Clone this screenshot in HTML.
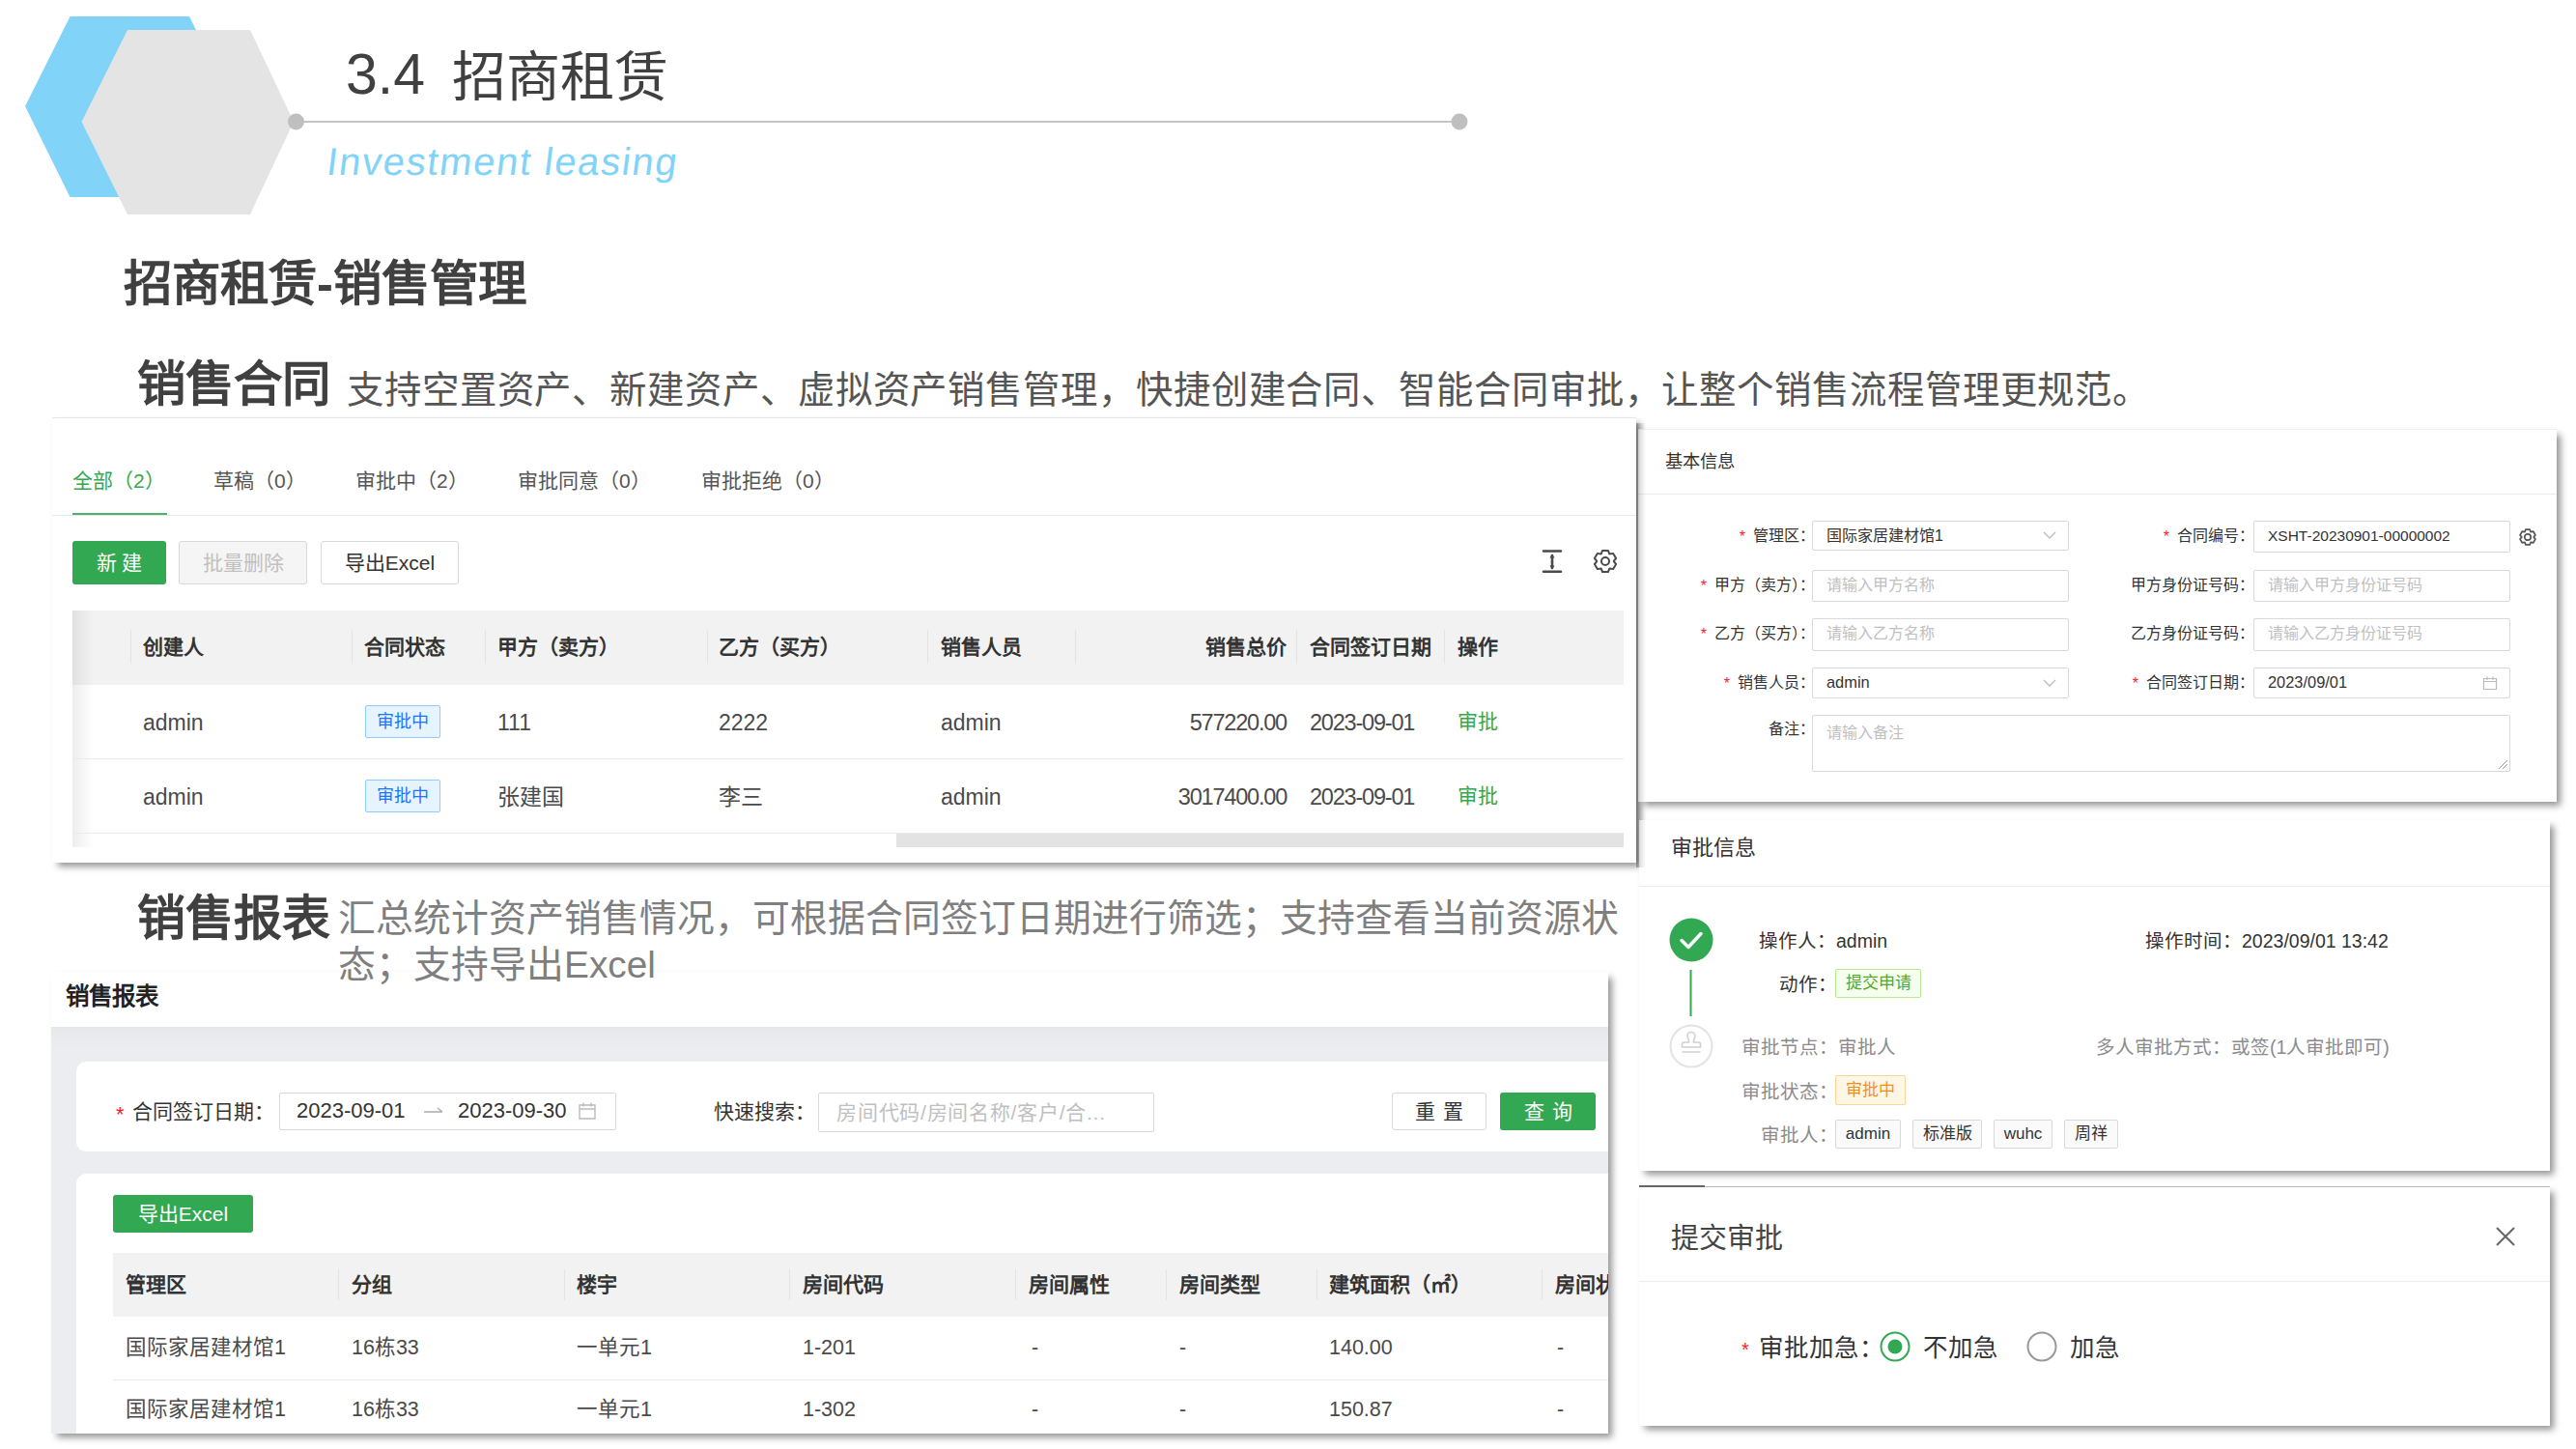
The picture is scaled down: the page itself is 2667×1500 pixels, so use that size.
<!DOCTYPE html>
<html lang="zh-CN"><head><meta charset="utf-8">
<style>
*{box-sizing:border-box;margin:0;padding:0}
html,body{width:2667px;height:1500px;overflow:hidden;background:#fff}
body{position:relative;font-family:"Liberation Sans",sans-serif;color:#333}
.a{position:absolute;white-space:nowrap}
.panel{position:absolute;background:#fff}
.ln{position:absolute;background:#e8e8e8}
.t{position:absolute;white-space:nowrap;line-height:1}
.g{color:#33a852}
.btn{position:absolute;border-radius:3px;text-align:center;white-space:nowrap}
.th{font-weight:bold;color:#333}
.lb{font-size:16px;color:#333;text-align:right}
.rq2{font-size:16px;color:#f5222d;margin-right:8px;position:relative;top:1px}
.rq{font-size:16px;color:#f5222d}
.inp{position:absolute;border:1px solid #d9d9d9;border-radius:2px;background:#fff;font-size:16px;line-height:29px;padding-left:14px;color:#333;white-space:nowrap;overflow:hidden}
.ph{color:#c0c0c0}
.wt{height:30px;background:#fafafa;border:1px solid #d9d9d9;color:#333;font-size:17px;line-height:28px}
.rc{font-size:21.5px;color:#4a4a4a}
.tag{position:absolute;border-radius:2px;text-align:center;white-space:nowrap}

</style></head><body>

<!-- ===== HEADER ===== -->
<svg class="a" style="left:0;top:0" width="1540" height="240" viewBox="0 0 1540 240">
  <polygon points="72.5,17 196,17 242,110 196,204 72.5,204 26,110" fill="#81d3f8"/>
  <polygon points="132,31 259,31 304,126 259,222 132,222 84.5,126" fill="#e4e4e4"/>
  <rect x="306" y="125" width="1205" height="2" fill="#c4c4c4"/>
  <circle cx="306.5" cy="126" r="8.5" fill="#bfbfbf"/>
  <circle cx="1511" cy="126" r="8.5" fill="#bfbfbf"/>
</svg>
<div class="a" id="t34" style="left:358px;top:44px;font-size:56px;line-height:70px;color:#404040"><span style="font-size:59px;position:relative;top:-2px">3.4</span><span style="margin-left:28px">招商租赁</span></div>
<div class="a" id="inv" style="left:337px;top:142px;transform:skewX(-7deg);transform-origin:0 38px;font-size:40px;line-height:50px;color:#81d3f8;letter-spacing:1.7px">Investment leasing</div>
<div class="a" id="sub" style="left:128px;top:261px;font-size:50.5px;line-height:66px;color:#404040;font-weight:bold">招商租赁-销售管理</div>

<!-- ===== SECTION 1 HEADING ===== -->
<div class="a" id="h1" style="left:142px;top:365px;font-size:50.5px;line-height:66px;color:#404040;font-weight:bold">销售合同</div>
<div class="a" id="d1" style="left:359px;top:379px;font-size:38.4px;letter-spacing:0.9px;line-height:50px;color:#555">支持空置资产、新建资产、虚拟资产销售管理，快捷创建合同、智能合同审批，让整个销售流程管理更规范。</div>

<!-- ===== PANEL 1 ===== -->
<div class="panel" id="p1" style="left:54px;top:432px;width:1640px;height:461px;border-top:1px solid #e6e6e6;box-shadow:5px 5px 7px -1px rgba(0,0,0,.42)">
</div>


<!-- tabs -->
<div class="t g" style="left:75px;top:487px;font-size:21px">全部（2）</div>
<div class="t" style="left:221px;top:487px;font-size:21px;color:#555">草稿（0）</div>
<div class="t" style="left:368px;top:487px;font-size:21px;color:#555">审批中（2）</div>
<div class="t" style="left:536px;top:487px;font-size:21px;color:#555">审批同意（0）</div>
<div class="t" style="left:726px;top:487px;font-size:21px;color:#555">审批拒绝（0）</div>
<div class="a" style="left:75px;top:531px;width:98px;height:3px;background:#4fb06f"></div>
<div class="ln" style="left:54px;top:533px;width:1640px;height:1px;background:#e6e6e6"></div>
<!-- buttons -->
<div class="btn" style="left:75px;top:560px;width:97px;height:45px;background:#33a852;color:#fff;font-size:21px;line-height:45px;letter-spacing:5px;padding-left:4px">新建</div>
<div class="btn" style="left:185px;top:560px;width:133px;height:45px;background:#f5f5f5;border:1px solid #d9d9d9;color:#c0c0c0;font-size:21px;line-height:43px">批量删除</div>
<div class="btn" style="left:332px;top:560px;width:143px;height:45px;background:#fff;border:1px solid #d9d9d9;color:#333;font-size:21px;line-height:43px">导出Excel</div>
<!-- toolbar icons -->
<svg class="a" style="left:1594px;top:566px" width="26" height="30" viewBox="0 0 26 30">
  <path d="M4 4.5H22M4 25.7H22M13 9V22" stroke="#4a4a4a" stroke-width="2.6" fill="none" stroke-linecap="round"/>
  <path d="M13 7.5L15.6 11.5H10.4ZM13 23.5L15.6 19.5H10.4Z" fill="#4a4a4a"/>
</svg>
<svg class="a" style="left:1648px;top:567px" width="28" height="28" viewBox="0 0 28 28">
  <path fill="none" stroke="#4a4a4a" stroke-width="2" stroke-linejoin="round" d="M9.78 6.28 L11.04 2.89 L16.96 2.89 L18.22 6.28 L18.58 6.48 L22.15 5.88 L25.10 11.00 L22.80 13.79 L22.80 14.21 L25.10 17.00 L22.15 22.12 L18.58 21.52 L18.22 21.72 L16.96 25.11 L11.04 25.11 L9.78 21.72 L9.42 21.52 L5.85 22.12 L2.90 17.00 L5.20 14.21 L5.20 13.79 L2.90 11.00 L5.85 5.88 L9.42 6.48Z"/>
  <circle cx="14" cy="14" r="4" fill="none" stroke="#4a4a4a" stroke-width="2"/>
</svg>
<!-- table -->
<div class="a" style="left:75px;top:632px;width:1606px;height:77px;background:#f2f2f2"></div>
<div class="a" style="left:75px;top:632px;width:22px;height:245px;background:linear-gradient(90deg,rgba(0,0,0,.07),rgba(0,0,0,0))"></div>
<div class="ln" style="left:75px;top:785px;width:1606px;height:1px;background:#ebebeb"></div>
<div class="ln" style="left:75px;top:862px;width:1606px;height:1px;background:#ebebeb"></div>
<div class="a" style="left:928px;top:863px;width:753px;height:14px;background:#e3e3e3"></div>
<div class="ln" style="left:135px;top:652px;width:1px;height:35px;background:#e3e3e3"></div>
<div class="ln" style="left:364px;top:652px;width:1px;height:35px;background:#e3e3e3"></div>
<div class="ln" style="left:502px;top:652px;width:1px;height:35px;background:#e3e3e3"></div>
<div class="ln" style="left:732px;top:652px;width:1px;height:35px;background:#e3e3e3"></div>
<div class="ln" style="left:960px;top:652px;width:1px;height:35px;background:#e3e3e3"></div>
<div class="ln" style="left:1113px;top:652px;width:1px;height:35px;background:#e3e3e3"></div>
<div class="ln" style="left:1342px;top:652px;width:1px;height:35px;background:#e3e3e3"></div>
<div class="ln" style="left:1495px;top:652px;width:1px;height:35px;background:#e3e3e3"></div>
<div class="t th" style="left:148px;top:659px;font-size:21px">创建人</div>
<div class="t th" style="left:377px;top:659px;font-size:21px">合同状态</div>
<div class="t th" style="left:515px;top:659px;font-size:21px">甲方（卖方）</div>
<div class="t th" style="left:744px;top:659px;font-size:21px">乙方（买方）</div>
<div class="t th" style="left:974px;top:659px;font-size:21px">销售人员</div>
<div class="t th" style="left:1248px;top:659px;font-size:21px;width:84px;text-align:right">销售总价</div>
<div class="t th" style="left:1356px;top:659px;font-size:21px">合同签订日期</div>
<div class="t th" style="left:1509px;top:659px;font-size:21px">操作</div>
<!-- row 1 -->
<div class="t" style="left:148px;top:737px;font-size:23px;color:#4a4a4a">admin</div>
<div class="tag" style="left:378px;top:730px;width:78px;height:34px;background:#e6f4ff;border:1px solid #91caff;color:#1677ff;font-size:18px;line-height:32px">审批中</div>
<div class="t" style="left:515px;top:737px;font-size:23px;color:#4a4a4a">111</div>
<div class="t" style="left:744px;top:737px;font-size:23px;color:#4a4a4a">2222</div>
<div class="t" style="left:974px;top:737px;font-size:23px;color:#4a4a4a">admin</div>
<div class="t" style="left:1132px;top:737px;font-size:23.5px;color:#4a4a4a;width:200px;text-align:right;letter-spacing:-1.2px">577220.00</div>
<div class="t" style="left:1356px;top:737px;font-size:23.5px;letter-spacing:-1.2px;color:#4a4a4a">2023-09-01</div>
<div class="t g" style="left:1509px;top:736px;font-size:21px">审批</div>
<!-- row 2 -->
<div class="t" style="left:148px;top:814px;font-size:23px;color:#4a4a4a">admin</div>
<div class="tag" style="left:378px;top:807px;width:78px;height:34px;background:#e6f4ff;border:1px solid #91caff;color:#1677ff;font-size:18px;line-height:32px">审批中</div>
<div class="t" style="left:515px;top:814px;font-size:23px;color:#4a4a4a">张建国</div>
<div class="t" style="left:744px;top:814px;font-size:23px;color:#4a4a4a">李三</div>
<div class="t" style="left:974px;top:814px;font-size:23px;color:#4a4a4a">admin</div>
<div class="t" style="left:1132px;top:814px;font-size:23.5px;color:#4a4a4a;width:200px;text-align:right;letter-spacing:-1.2px">3017400.00</div>
<div class="t" style="left:1356px;top:814px;font-size:23.5px;letter-spacing:-1.2px;color:#4a4a4a">2023-09-01</div>
<div class="t g" style="left:1509px;top:813px;font-size:21px">审批</div>

<!-- ===== PANEL 2 ===== -->
<div class="panel" id="p2" style="left:1696px;top:444px;width:951px;height:386px;border-top:1px solid #eee;box-shadow:5px 5px 7px -1px rgba(0,0,0,.42)">
</div>


<div class="t" style="left:1724px;top:469px;font-size:18.3px;color:#333">基本信息</div>
<div class="ln" style="left:1696px;top:511px;width:951px;height:1px;background:#ececec"></div>
<!-- labels left -->
<div class="t lb" style="left:1681px;top:547px;width:198px"><span class="rq2">*</span>管理区：</div>
<div class="t lb" style="left:1681px;top:598px;width:198px"><span class="rq2">*</span>甲方（卖方）：</div>
<div class="t lb" style="left:1681px;top:648px;width:198px"><span class="rq2">*</span>乙方（买方）：</div>
<div class="t lb" style="left:1681px;top:699px;width:198px"><span class="rq2">*</span>销售人员：</div>
<div class="t lb" style="left:1681px;top:747px;width:198px">备注：</div>
<!-- labels right -->
<div class="t lb" style="left:2134px;top:547px;width:200px"><span class="rq2">*</span>合同编号：</div>
<div class="t lb" style="left:2134px;top:598px;width:200px">甲方身份证号码：</div>
<div class="t lb" style="left:2134px;top:648px;width:200px">乙方身份证号码：</div>
<div class="t lb" style="left:2134px;top:699px;width:200px"><span class="rq2">*</span>合同签订日期：</div>
<!-- inputs -->
<div class="inp" style="left:1876px;top:539px;width:266px;height:31px">国际家居建材馆1</div>
<div class="inp ph" style="left:1876px;top:590px;width:266px;height:33px">请输入甲方名称</div>
<div class="inp ph" style="left:1876px;top:640px;width:266px;height:34px">请输入乙方名称</div>
<div class="inp" style="left:1876px;top:691px;width:266px;height:32px;font-size:16.4px">admin</div>
<div class="inp ph" style="left:1876px;top:740px;width:723px;height:59px;line-height:36px">请输入备注</div>
<div class="inp" style="left:2333px;top:539px;width:266px;height:33px;font-size:15.5px">XSHT-20230901-00000002</div>
<div class="inp ph" style="left:2333px;top:590px;width:266px;height:33px">请输入甲方身份证号码</div>
<div class="inp ph" style="left:2333px;top:640px;width:266px;height:34px">请输入乙方身份证号码</div>
<div class="inp" style="left:2333px;top:691px;width:266px;height:32px;font-size:16.4px">2023/09/01</div>
<svg class="a" style="left:2115px;top:549px" width="14" height="10" viewBox="0 0 14 10"><path d="M1 2L7 8L13 2" stroke="#bbb" stroke-width="1.3" fill="none"/></svg>
<svg class="a" style="left:2115px;top:702px" width="14" height="10" viewBox="0 0 14 10"><path d="M1 2L7 8L13 2" stroke="#bbb" stroke-width="1.3" fill="none"/></svg>
<svg class="a" style="left:2570px;top:699px" width="16" height="16" viewBox="0 0 16 16"><path d="M1.5 3.5H14.5V14.5H1.5ZM1.5 6.5H14.5M5 1.5V5M11 1.5V5" stroke="#bbb" stroke-width="1.2" fill="none"/></svg>
<svg class="a" style="left:2607px;top:546px" width="20" height="20" viewBox="0 0 28 28">
  <path fill="none" stroke="#555" stroke-width="2.4" stroke-linejoin="round" d="M9.78 6.28 L11.04 2.89 L16.96 2.89 L18.22 6.28 L18.58 6.48 L22.15 5.88 L25.10 11.00 L22.80 13.79 L22.80 14.21 L25.10 17.00 L22.15 22.12 L18.58 21.52 L18.22 21.72 L16.96 25.11 L11.04 25.11 L9.78 21.72 L9.42 21.52 L5.85 22.12 L2.90 17.00 L5.20 14.21 L5.20 13.79 L2.90 11.00 L5.85 5.88 L9.42 6.48Z"/>
  <circle cx="14" cy="14" r="4.5" fill="none" stroke="#555" stroke-width="2.4"/>
</svg>
<svg class="a" style="left:2585px;top:785px" width="12" height="12" viewBox="0 0 12 12"><path d="M2 11L11 2M6 11L11 6" stroke="#999" stroke-width="1"/></svg>

<!-- ===== PANEL 3 ===== -->
<div class="panel" id="p3" style="left:1697px;top:849px;width:943px;height:363px;box-shadow:5px 5px 7px -1px rgba(0,0,0,.42)">
</div>


<div class="t" style="left:1730px;top:867px;font-size:22px;color:#333">审批信息</div>
<div class="ln" style="left:1697px;top:917px;width:943px;height:1px;background:#ececec"></div>
<svg class="a" style="left:1720px;top:942px" width="62" height="175" viewBox="0 0 62 175">
  <circle cx="31" cy="31" r="22.5" fill="#33a852"/>
  <path d="M21 31.5L28 38.5L41 24.5" stroke="#fff" stroke-width="3.5" fill="none" stroke-linecap="round" stroke-linejoin="round"/>
  <rect x="29.5" y="62" width="2" height="48" fill="#33a852"/>
  <circle cx="31" cy="141" r="21.5" fill="#fff" stroke="#e3e3e3" stroke-width="2"/>
  <path d="M27 130.5a4 4 0 0 1 8 0c0 2-1.5 3-1.5 5v1.5h5a2 2 0 0 1 2 2v3h-19v-3a2 2 0 0 1 2-2h5v-1.5c0-2-1.5-3-1.5-5zM21.5 147h19" stroke="#d0d0d0" stroke-width="1.6" fill="none"/>
</svg>
<div class="t" style="left:1821px;top:965px;font-size:19.5px;color:#333">操作人：<span style="margin-left:0px">admin</span></div>
<div class="t" style="left:2221px;top:965px;font-size:19.5px;color:#333">操作时间：2023/09/01 13:42</div>
<div class="t" style="left:1842px;top:1010px;font-size:19.5px;color:#333">动作：</div>
<div class="tag" style="left:1900px;top:1003px;width:89px;height:30px;background:#f6ffed;border:1px solid #b7eb8f;color:#52a82a;font-size:17px;line-height:28px">提交申请</div>
<div class="t" style="left:1803px;top:1075px;font-size:19.5px;color:#8c8c8c">审批节点：审批人</div>
<div class="t" style="left:2170px;top:1075px;font-size:19.5px;color:#8c8c8c">多人审批方式：或签(1人审批即可)</div>
<div class="t" style="left:1803px;top:1121px;font-size:19.5px;color:#8c8c8c">审批状态：</div>
<div class="tag" style="left:1900px;top:1113px;width:73px;height:31px;background:#fff7e6;border:1px solid #ffd591;color:#fa8c16;font-size:17px;line-height:29px">审批中</div>
<div class="t" style="left:1823px;top:1166px;font-size:19.5px;color:#8c8c8c">审批人：</div>
<div class="tag wt" style="left:1900px;top:1159px;width:68px">admin</div>
<div class="tag wt" style="left:1980px;top:1159px;width:72px">标准版</div>
<div class="tag wt" style="left:2064px;top:1159px;width:61px">wuhc</div>
<div class="tag wt" style="left:2137px;top:1159px;width:56px">周祥</div>

<div class="a" style="left:1694px;top:438px;width:10px;height:460px;background:linear-gradient(90deg,rgba(0,0,0,.33),rgba(0,0,0,.12) 40%,rgba(0,0,0,0))"></div>
<!-- ===== PANEL 4 ===== -->
<div class="panel" id="p4" style="left:1697px;top:1228px;width:943px;height:248px;border-top:1px solid #bbb;box-shadow:5px 5px 7px -1px rgba(0,0,0,.42)">
</div>


<div class="t" style="left:1730px;top:1268px;font-size:29px;color:#444">提交审批</div>
<svg class="a" style="left:2583px;top:1269px" width="22" height="22" viewBox="0 0 22 22"><path d="M2 2L20 20M20 2L2 20" stroke="#666" stroke-width="2"/></svg>
<div class="ln" style="left:1697px;top:1326px;width:943px;height:1px;background:#ececec"></div>
<div class="t" style="left:1803px;top:1387px;font-size:20px;color:#f5222d">*</div>
<div class="t" style="left:1821px;top:1383px;font-size:25.5px;color:#333">审批加急：</div>
<svg class="a" style="left:1945px;top:1377px" width="34" height="34" viewBox="0 0 34 34"><circle cx="17" cy="17" r="14.5" fill="#fff" stroke="#33a852" stroke-width="2"/><circle cx="17" cy="17" r="7.5" fill="#33a852"/></svg>
<div class="t" style="left:1991px;top:1383px;font-size:25.5px;color:#333">不加急</div>
<svg class="a" style="left:2097px;top:1377px" width="34" height="34" viewBox="0 0 34 34"><circle cx="17" cy="17" r="14.5" fill="#fff" stroke="#999" stroke-width="2"/></svg>
<div class="t" style="left:2143px;top:1383px;font-size:25.5px;color:#333">加急</div>

<div class="a" style="left:1697px;top:1227px;width:68px;height:2px;background:#666"></div>
<!-- ===== SECTION 2 HEADING ===== -->
<div class="a" id="h2" style="left:142px;top:918px;font-size:50px;line-height:66px;color:#404040;font-weight:bold">销售报表</div>


<!-- ===== PANEL 5 ===== -->
<div class="panel" id="p5" style="left:53px;top:1006px;width:1612px;height:478px;box-shadow:5px 5px 7px -1px rgba(0,0,0,.42)">
</div>


<div class="t" style="left:68px;top:1020px;font-size:24.5px;font-weight:bold;color:#222">销售报表</div>
<div class="a" style="left:53px;top:1063px;width:1612px;height:421px;background:linear-gradient(180deg,#e6e8eb,#ebedf0 25px)"></div>
<div class="a" style="left:79px;top:1099px;width:1586px;height:93px;background:#fff;border-radius:10px 0 0 10px"></div>
<div class="t" style="left:120px;top:1143px;font-size:22px;color:#f5222d">*</div>
<div class="t" style="left:137px;top:1140px;font-size:21px;color:#333">合同签订日期：</div>
<div class="a" style="left:289px;top:1131px;width:349px;height:39px;border:1px solid #d9d9d9;border-radius:2px;background:#fff"></div>
<div class="t" style="left:307px;top:1139px;font-size:22px;color:#333">2023-09-01</div>
<svg class="a" style="left:438px;top:1144px" width="22" height="12" viewBox="0 0 22 12"><path d="M1 7H20M15 3L20 7" stroke="#aaa" stroke-width="1.3" fill="none"/></svg>
<div class="t" style="left:474px;top:1139px;font-size:22px;color:#333">2023-09-30</div>
<svg class="a" style="left:598px;top:1140px" width="20" height="20" viewBox="0 0 20 20"><path d="M2 4H18V18H2ZM2 8H18M6 1.5V5.5M14 1.5V5.5" stroke="#bbb" stroke-width="1.4" fill="none"/></svg>
<div class="t" style="left:739px;top:1140px;font-size:21px;color:#333">快速搜索：</div>
<div class="a" style="left:847px;top:1131px;width:348px;height:41px;border:1px solid #d9d9d9;border-radius:2px;background:#fff"></div>
<div class="t" style="left:866px;top:1141px;font-size:21px;color:#bfbfbf;letter-spacing:0.75px">房间代码/房间名称/客户/合...</div>
<div class="btn" style="left:1441px;top:1131px;width:98px;height:39px;border:1px solid #d9d9d9;background:#fff;color:#333;font-size:21px;line-height:37px;letter-spacing:8px;padding-left:8px">重置</div>
<div class="btn" style="left:1553px;top:1131px;width:99px;height:39px;background:#33a852;color:#fff;font-size:21px;line-height:39px;letter-spacing:8px;padding-left:8px">查询</div>
<div class="a" style="left:79px;top:1215px;width:1586px;height:269px;background:#fff;border-radius:10px 0 0 0"></div>
<div class="btn" style="left:117px;top:1237px;width:145px;height:39px;background:#33a852;color:#fff;font-size:21px;line-height:39px">导出Excel</div>
<div class="a" style="left:117px;top:1297px;width:1548px;height:66px;background:#f2f2f2"></div>
<div class="ln" style="left:117px;top:1428px;width:1548px;height:1px;background:#ebebeb"></div>
<div class="ln" style="left:350px;top:1314px;width:1px;height:32px;background:#e3e3e3"></div>
<div class="ln" style="left:584px;top:1314px;width:1px;height:32px;background:#e3e3e3"></div>
<div class="ln" style="left:817px;top:1314px;width:1px;height:32px;background:#e3e3e3"></div>
<div class="ln" style="left:1051px;top:1314px;width:1px;height:32px;background:#e3e3e3"></div>
<div class="ln" style="left:1207px;top:1314px;width:1px;height:32px;background:#e3e3e3"></div>
<div class="ln" style="left:1363px;top:1314px;width:1px;height:32px;background:#e3e3e3"></div>
<div class="ln" style="left:1596px;top:1314px;width:1px;height:32px;background:#e3e3e3"></div>
<div class="a" style="left:53px;top:1006px;width:1612px;height:478px;overflow:hidden">
<div class="t th" style="left:77px;top:313px;font-size:21px">管理区</div>
<div class="t th" style="left:311px;top:313px;font-size:21px">分组</div>
<div class="t th" style="left:544px;top:313px;font-size:21px">楼宇</div>
<div class="t th" style="left:778px;top:313px;font-size:21px">房间代码</div>
<div class="t th" style="left:1012px;top:313px;font-size:21px">房间属性</div>
<div class="t th" style="left:1168px;top:313px;font-size:21px">房间类型</div>
<div class="t th" style="left:1323px;top:313px;font-size:21px">建筑面积（㎡）</div>
<div class="t th" style="left:1557px;top:313px;font-size:21px">房间状态</div>
<div class="t rc" style="left:77px;top:379px">国际家居建材馆1</div>
<div class="t rc" style="left:311px;top:379px">16栋33</div>
<div class="t rc" style="left:544px;top:379px">一单元1</div>
<div class="t rc" style="left:778px;top:379px">1-201</div>
<div class="t rc" style="left:1015px;top:379px">-</div>
<div class="t rc" style="left:1168px;top:379px">-</div>
<div class="t rc" style="left:1323px;top:379px">140.00</div>
<div class="t rc" style="left:1559px;top:379px">-</div>
<div class="t rc" style="left:77px;top:443px">国际家居建材馆1</div>
<div class="t rc" style="left:311px;top:443px">16栋33</div>
<div class="t rc" style="left:544px;top:443px">一单元1</div>
<div class="t rc" style="left:778px;top:443px">1-302</div>
<div class="t rc" style="left:1015px;top:443px">-</div>
<div class="t rc" style="left:1168px;top:443px">-</div>
<div class="t rc" style="left:1323px;top:443px">150.87</div>
<div class="t rc" style="left:1559px;top:443px">-</div>
</div>

<div class="a" id="d2" style="left:350px;top:927px;font-size:38.8px;line-height:48px;color:#7f7f7f;white-space:normal;width:1340px">汇总统计资产销售情况，可根据合同签订日期进行筛选；支持查看当前资源状态；支持导出Excel</div>
</body></html>
